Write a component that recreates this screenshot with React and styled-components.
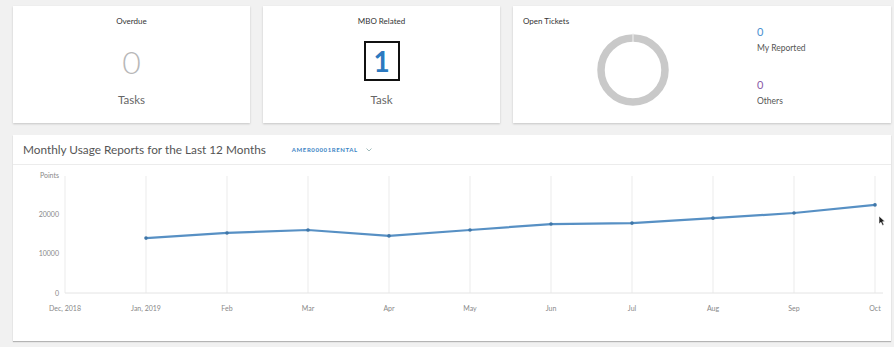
import React from "react"
import styled, { createGlobalStyle } from "styled-components"

const Global = createGlobalStyle`
  body {
    margin: 0;
    background: #f1f1f1;
    font-family: Lato, "Open Sans", sans-serif;
  }
`

const Page = styled.div`
  width: 894px;
  height: 347px;
  box-sizing: border-box;
  padding: 6px 3px 0 13px;
  display: flex;
  flex-direction: column;
  gap: 12px;
  overflow: hidden;
`

const TopRow = styled.div`
  display: grid;
  grid-template-columns: 237px 237px 1fr;
  gap: 13px;
`

const Card = styled.div`
  background: #fff;
  height: 117px;
  box-sizing: border-box;
  box-shadow: 0 1px 2px rgba(0, 0, 0, 0.18);
  display: flex;
  flex-direction: column;
  align-items: ${p => (p.$left ? "stretch" : "center")};
  padding: ${p => (p.$left ? "10px 10px 0 10px" : "10px 0 0 0")};
`

const CardTitle = styled.div`
  font-size: 8px;
  color: #333;
  line-height: 10px;
`

const BigNum = styled.div`
  margin-top: 15px;
  height: 40px;
  display: flex;
  align-items: center;
  justify-content: center;
  font-size: 32px;
  font-weight: 300;
  color: #b8b8b8;
`

const Boxed = styled.div`
  margin-top: 15px;
  width: 36px;
  height: 40px;
  box-sizing: border-box;
  border: 2.5px solid #111;
  display: flex;
  align-items: center;
  justify-content: center;
  font-size: 28px;
  font-weight: 700;
  color: #2c79c0;
`

const Unit = styled.div`
  margin-top: 12px;
  font-size: 11.5px;
  color: #666;
`

const TicketBody = styled.div`
  display: grid;
  grid-template-columns: 220px 1fr;
  margin-top: -3px;
`

const Donut = styled.div`
  display: flex;
  justify-content: center;
  padding-top: 9px;
`

const Legend = styled.div`
  display: flex;
  flex-direction: column;
  padding-left: 14px;
`

const LegendNum = styled.div`
  font-size: 11px;
  line-height: 13px;
  color: ${p => p.$color};
  margin-top: ${p => p.$gap};
  margin-bottom: 5px;
`

const LegendLabel = styled.div`
  font-size: 8.5px;
  line-height: 11px;
  color: #555;
`

const Panel = styled.div`
  background: #fff;
  height: 206px;
  box-shadow: 0 1px 1px rgba(0, 0, 0, 0.25);
  position: relative;
  display: flex;
  flex-direction: column;
`

const PanelHeader = styled.div`
  height: 30px;
  box-sizing: border-box;
  border-bottom: 1px solid #ececec;
  display: flex;
  align-items: center;
  padding-left: 10px;
  gap: 26px;
`

const PanelTitle = styled.div`
  font-size: 11.8px;
  color: #555;
`

const Select = styled.div`
  font-size: 6px;
  letter-spacing: 0.6px;
  color: #3b84c4;
  font-weight: 700;
  display: flex;
  align-items: center;
  gap: 8px;
`

const Cursor = styled.svg`
  position: absolute;
  left: 865px;
  top: 81px;
`

const months = ["Dec, 2018", "Jan, 2019", "Feb", "Mar", "Apr", "May", "Jun", "Jul", "Aug", "Sep", "Oct"]
const values = [null, 13900, 15200, 15950, 14450, 15950, 17450, 17700, 18950, 20250, 22300]

const X0 = 52
const DX = 81
const Y0 = 128
const yOf = v => Y0 - v * 0.00395

const Chart = () => {
  const pts = values
    .map((v, i) => (v == null ? null : [X0 + DX * i, yOf(v)]))
    .filter(Boolean)
  return (
    <svg width="878" height="175" style={{ display: "block" }}>
      {months.map((m, i) => (
        <line key={m} x1={X0 + DX * i} x2={X0 + DX * i} y1="11" y2={Y0} stroke="#ebebeb" strokeWidth="1" />
      ))}
      <line x1={X0} x2="870" y1={Y0} y2={Y0} stroke="#e4e4e4" strokeWidth="1" />
      <g fill="#888" fontSize="7" fontFamily="Lato, sans-serif" textAnchor="end">
        <text x="46" y="13">Points</text>
        <text x="46" y="52">20000</text>
        <text x="46" y="91">10000</text>
        <text x="46" y="131">0</text>
      </g>
      <g fill="#888" fontSize="7" fontFamily="Lato, sans-serif" textAnchor="middle">
        {months.map((m, i) => (
          <text key={m} x={X0 + DX * i} y="146">{m}</text>
        ))}
      </g>
      <polyline
        points={pts.map(p => p.join(",")).join(" ")}
        fill="none"
        stroke="#5790c4"
        strokeWidth="2.2"
        strokeLinejoin="round"
      />
      {pts.map(([x, y]) => (
        <circle key={x} cx={x} cy={y} r="1.8" fill="#3f76a8" />
      ))}
    </svg>
  )
}

export default function App() {
  return (
    <>
      <Global />
      <Page>
        <TopRow>
          <Card>
            <CardTitle>Overdue</CardTitle>
            <BigNum>0</BigNum>
            <Unit>Tasks</Unit>
          </Card>
          <Card>
            <CardTitle>MBO Related</CardTitle>
            <Boxed>1</Boxed>
            <Unit>Task</Unit>
          </Card>
          <Card $left>
            <CardTitle>Open Tickets</CardTitle>
            <TicketBody>
              <Donut>
                <svg width="76" height="76" viewBox="0 0 76 76">
                  <circle cx="38" cy="38" r="32" fill="none" stroke="#c9c9c9" strokeWidth="7.5" />
                  <line x1="38" y1="1" x2="38" y2="10" stroke="#f4f4f4" strokeWidth="1" />
                </svg>
              </Donut>
              <Legend>
                <LegendNum $color="#4a90d0" $gap="2px">0</LegendNum>
                <LegendLabel>My Reported</LegendLabel>
                <LegendNum $color="#8a5ca8" $gap="24px">0</LegendNum>
                <LegendLabel>Others</LegendLabel>
              </Legend>
            </TicketBody>
          </Card>
        </TopRow>
        <Panel>
          <PanelHeader>
            <PanelTitle>Monthly Usage Reports for the Last 12 Months</PanelTitle>
            <Select>
              AMER00001RENTAL
              <svg width="6" height="4" viewBox="0 0 6 4">
                <path d="M0.5 0.5 L3 3 L5.5 0.5" fill="none" stroke="#8aa" strokeWidth="0.8" />
              </svg>
            </Select>
          </PanelHeader>
          <Chart />
          <Cursor width="8" height="11" viewBox="0 0 8 11">
            <path d="M1 0 L1 8 L3 6.3 L4.5 9.5 L6 8.8 L4.6 5.7 L7 5.6 Z" fill="#222" stroke="#fff" strokeWidth="0.6" />
          </Cursor>
        </Panel>
      </Page>
    </>
  )
}
